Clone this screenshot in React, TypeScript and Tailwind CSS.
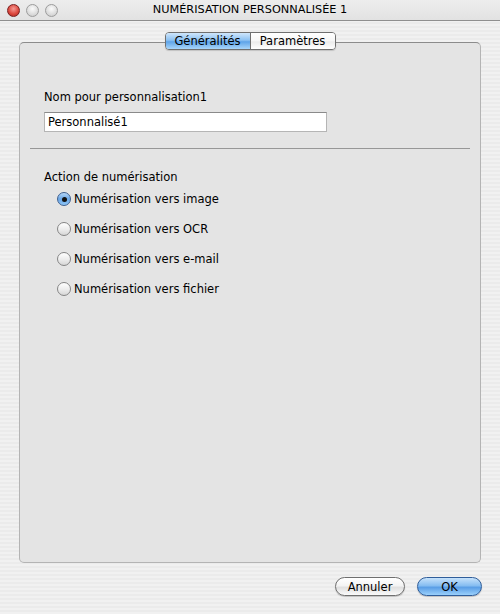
const options = [
  "Numérisation vers image",
  "Numérisation vers OCR",
  "Numérisation vers e-mail",
  "Numérisation vers fichier",
]

function TrafficLight({ red }: { red?: boolean }) {
  return red ? (
    <div className="w-[13px] h-[13px] rounded-full border border-[#7a2020] bg-[radial-gradient(circle_at_50%_35%,#f59a94_0%,#dd4a40_55%,#a82219_100%)]" />
  ) : (
    <div className="w-[13px] h-[13px] rounded-full border border-[#9c9c9c] bg-[radial-gradient(circle_at_50%_35%,#fbfbfb_0%,#dcdcdc_60%,#c4c4c4_100%)]" />
  )
}

function Radio({ checked }: { checked?: boolean }) {
  if (checked) {
    return (
      <div className="w-[14px] h-[14px] rounded-full border border-[#3e5f8f] bg-[linear-gradient(180deg,#b6d7f7_0%,#6aa6e6_50%,#8ec6f7_100%)] flex items-center justify-center">
        <div className="w-[5px] h-[5px] rounded-full bg-[#111]" />
      </div>
    )
  }
  return (
    <div className="w-[14px] h-[14px] rounded-full border border-[#858585] bg-[linear-gradient(180deg,#ffffff_0%,#ececec_55%,#d6d6d6_100%)]" />
  )
}

export default function App() {
  return (
    <div className="w-[500px] h-[614px] flex flex-col text-[11.5px] leading-[14px] text-black font-['DejaVu_Sans',sans-serif] bg-[repeating-linear-gradient(180deg,#f1f1f1_0px,#f1f1f1_2px,#ebebeb_2px,#ebebeb_4px)]">
      {/* title bar */}
      <div className="h-[21px] grid grid-cols-[60px_1fr_60px] items-center border-b border-[#8f8f8f] bg-[linear-gradient(180deg,#ededed_0%,#e2e2e2_100%)]">
        <div className="flex items-center gap-[6px] pl-[7px]">
          <TrafficLight red />
          <TrafficLight />
          <TrafficLight />
        </div>
        <div className="text-center text-[11.3px]">NUMÉRISATION PERSONNALISÉE 1</div>
        <div />
      </div>

      <div className="px-[19px] pt-[11px]">
        {/* tabs */}
        <div className="relative z-10 flex justify-center">
          <div className="flex h-[18px] rounded-[4px] border border-[#6f6f6f] overflow-hidden shadow-[0_1px_1px_rgba(0,0,0,0.15)]">
            <div className="w-[85px] flex items-center justify-center border-r border-[#6f6f6f] bg-[linear-gradient(180deg,#cfe6fb_0%,#8cc1f2_45%,#5ea4e9_55%,#a9d6fb_100%)]">
              Généralités
            </div>
            <div className="w-[84px] flex items-center justify-center bg-[linear-gradient(180deg,#ffffff_0%,#f6f6f6_50%,#ebebeb_55%,#ffffff_100%)]">
              Paramètres
            </div>
          </div>
        </div>

        {/* panel */}
        <div className="-mt-[8px] h-[521px] rounded-[5px] border border-[#b4b4b4] border-t-[#8c8c8c] bg-[#e4e4e4] px-[24px] pt-[47px]">
          <div>Nom pour personnalisation1</div>
          <div className="mt-[8px] w-[283px] h-[20px] bg-white border border-[#b5b5b5] border-t-[#8a8a8a] flex items-center pl-[3px]">
            Personnalisé1
          </div>
          <div className="-mx-[14px] mt-[16px] h-px bg-[#979797]" />
          <div className="mt-[21px]">Action de numérisation</div>
          <div className="mt-[8px] ml-[13px] flex flex-col gap-[16px]">
            {options.map((label, i) => (
              <div key={label} className="h-[14px] flex items-center gap-[3px]">
                <Radio checked={i === 0} />
                <span>{label}</span>
              </div>
            ))}
          </div>
        </div>
      </div>

      {/* buttons */}
      <div className="mt-[14px] flex justify-end gap-[12px] pr-[18px]">
        <button className="w-[70px] h-[19px] rounded-full border border-[#6f6f6f] flex items-center justify-center bg-[linear-gradient(180deg,#ffffff_0%,#f4f4f4_45%,#e0e0e0_55%,#fafafa_100%)] shadow-[0_1px_1px_rgba(0,0,0,0.2)]">
          Annuler
        </button>
        <button className="w-[65px] h-[19px] rounded-full border border-[#2f5d9a] flex items-center justify-center bg-[linear-gradient(180deg,#c6e2fb_0%,#86bdf1_45%,#5a9ee6_55%,#9ad0fb_100%)] shadow-[0_1px_1px_rgba(0,0,0,0.2)]">
          OK
        </button>
      </div>
    </div>
  )
}
